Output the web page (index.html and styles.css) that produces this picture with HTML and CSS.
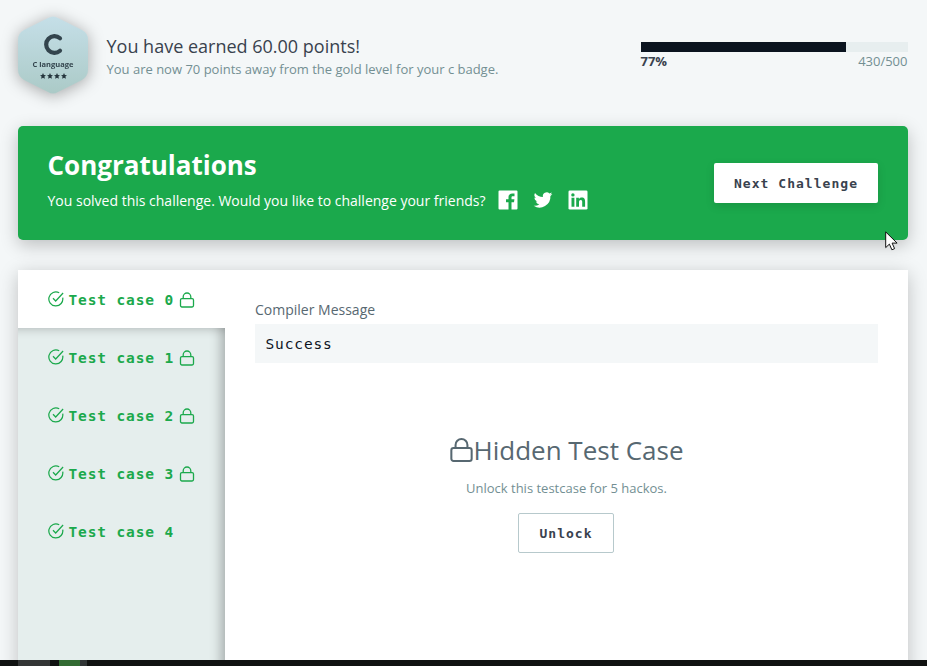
FILE: index.html
```html
<!DOCTYPE html>
<html lang="en">
<head>
<meta charset="utf-8">
<title>Challenge result</title>
<link rel="stylesheet" href="styles.css">
</head>
<body>
<svg class="defs" width="0" height="0" aria-hidden="true">
  <symbol id="check" viewBox="0 0 16 16"><path d="M14.700 6.600A7 7 0 1 1 11.200 1.800M5 7.200l2.700 2.800 7.400-8"/></symbol>
  <symbol id="lock" viewBox="0 0 16 16"><rect x="1.500" y="6.700" width="13" height="8.300" rx="1.400"/><path d="M4.200 6.700V4.800a3.800 3.800 0 0 1 7.600 0V6.700"/></symbol>
</svg>
<main class="page">
  <header class="progress-header">
    <div class="badge">
      <svg class="badge-shape" width="72" height="78" viewBox="0 0 72 78">
        <defs><linearGradient id="silver" x1="0" y1="0" x2="0" y2="1"><stop offset="0" stop-color="#c5dfe8"/><stop offset="1" stop-color="#abcac7"/></linearGradient></defs>
        <path fill="url(#silver)" d="M31 2Q36-1 41 2L65 14Q71 17 71 24V54Q71 60 65 64L41 76Q36 79 31 76L7 64Q1 60 1 54V24Q1 17 7 14Z"/>
        <path d="M43 22.300a8.300 8.300 0 1 0 0 12.400" fill="none" stroke="#33444d" stroke-width="4.200" stroke-linecap="round"/>
      </svg>
      <div class="badge-name">C language</div>
      <svg class="stars" width="27" height="6" viewBox="0 0 27 6"><g fill="#25353d"><path id="star" d="M3 0l.9 2 2.100.2-1.600 1.400.5 2.200L3 4.700 1.100 5.800l.5-2.200L0 2.200 2.100 2z"/><use href="#star" x="7"/><use href="#star" x="14"/><use href="#star" x="21"/></g></svg>
    </div>
    <div class="earned">
      <h1>You have earned 60.00 points!</h1>
      <p>You are now 70 points away from the gold level for your c badge.</p>
    </div>
    <div class="progress">
      <div class="track"><div class="fill"></div></div>
      <div class="progress-labels"><b>77%</b><span>430/500</span></div>
    </div>
  </header>

  <section class="congrats">
    <div>
      <h2>Congratulations</h2>
      <div class="share">
        <span class="share-text">You solved this challenge. Would you like to challenge your friends?</span>
        <svg width="20" height="20" viewBox="0 0 20 20"><path fill="#fff" d="M1.5.5h17a1 1 0 0 1 1 1v17a1 1 0 0 1-1 1h-5v-7.3H16l.4-2.9h-2.9V7.6c0-.9.3-1.4 1.5-1.4h1.5V3.5a20 20 0 0 0-2.2-.1c-2.3 0-3.8 1.3-3.8 3.8v2.1H8v2.9h2.5v7.3h-9a1 1 0 0 1-1-1v-17a1 1 0 0 1 1-1z"/></svg>
        <svg width="20" height="20" viewBox="0 0 24 24"><path fill="#fff" d="M23.2 4.9a9 9 0 0 1-2.6.7 4.600 4.600 0 0 0 2-2.500 9 9 0 0 1-2.900 1.100 4.600 4.600 0 0 0-7.800 4.200A13 13 0 0 1 2.400 3.600a4.600 4.600 0 0 0 1.400 6.100 4.500 4.500 0 0 1-2-.600 4.600 4.600 0 0 0 3.600 4.600 4.500 4.500 0 0 1-2 .1 4.600 4.600 0 0 0 4.200 3.200A9.200 9.200 0 0 1 .8 18.900 13 13 0 0 0 20.900 7.300a9 9 0 0 0 2.300-2.400z"/></svg>
        <svg width="20" height="20" viewBox="0 0 20 20"><rect x=".5" y=".5" width="19" height="19" rx="1.3" fill="#fff"/><g fill="#1ba94c"><circle cx="4.900" cy="4.900" r="1.700"/><path d="M3.500 7.700h2.900v9H3.500zM8.200 7.700h2.700v1.200c.5-.8 1.400-1.500 2.800-1.500 2.900 0 3.400 1.900 3.400 4.300v5h-2.900v-4.400c0-1.100 0-2.400-1.500-2.400s-1.700 1.100-1.700 2.300v4.500H8.200z"/></g></svg>
      </div>
    </div>
    <button class="btn next">Next Challenge</button>
  </section>

  <section class="results">
    <nav class="tabs">
      <a class="tab active"><svg class="line-icon check"><use href="#check"/></svg><span>Test case 0</span><svg class="line-icon lock"><use href="#lock"/></svg></a>
      <div class="inactive-tabs">
        <a class="tab"><svg class="line-icon check"><use href="#check"/></svg><span>Test case 1</span><svg class="line-icon lock"><use href="#lock"/></svg></a>
        <a class="tab"><svg class="line-icon check"><use href="#check"/></svg><span>Test case 2</span><svg class="line-icon lock"><use href="#lock"/></svg></a>
        <a class="tab"><svg class="line-icon check"><use href="#check"/></svg><span>Test case 3</span><svg class="line-icon lock"><use href="#lock"/></svg></a>
        <a class="tab"><svg class="line-icon check"><use href="#check"/></svg><span>Test case 4</span></a>
      </div>
    </nav>
    <div class="detail">
      <div class="label">Compiler Message</div>
      <div class="message">Success</div>
      <div class="hidden-case">
        <h3><svg class="line-icon big-lock"><use href="#lock"/></svg><span>Hidden Test Case</span></h3>
        <p>Unlock this testcase for 5 hackos.</p>
        <button class="btn unlock">Unlock</button>
      </div>
    </div>
  </section>
</main>
<footer class="taskbar"><i class="task gray"></i><i class="task green"></i><i class="task edge"></i></footer>
<svg class="cursor" width="13" height="20" viewBox="0 0 13 20"><path d="M.7.900v15.700l3.700-3.500 2.500 5.700 2.700-1.200-2.500-5.500h5z" fill="#fff" stroke="#111" stroke-width="1"/></svg>
</body>
</html>
```
FILE: styles.css
```css
* { box-sizing: border-box; }
body {
  margin: 0;
  height: 666px;
  overflow: hidden;
  display: flex;
  flex-direction: column;
  background: #f4f7f8;
  color: #39424e;
  font-family: "Open Sans", sans-serif;
}
h1, h2, h3, p { margin: 0; font-weight: 400; }
.defs { position: absolute; }
.page {
  height: 660px;
  padding: 0 19px 0 18px;
  overflow: hidden;
  display: flex;
  flex-direction: column;
}
.progress-header {
  height: 126px;
  flex: none;
  display: flex;
  align-items: flex-start;
}
.badge {
  position: relative;
  width: 72px;
  height: 78px;
  margin: 16px 0 0 -1px;
  filter: drop-shadow(0 2px 8px rgba(0, 0, 0, .33));
}
.badge-shape { display: block; }
.badge-name {
  position: absolute;
  top: 42px;
  left: 0;
  width: 72px;
  text-align: center;
  font-size: 7.5px;
  line-height: 12px;
  font-weight: 700;
  color: #33444d;
}
.stars { position: absolute; left: 23px; top: 57px; }
.earned { margin: 33px 0 0 17.5px; white-space: nowrap; }
.earned h1 { font-size: 18px; line-height: 26px; }
.earned p { font-size: 13px; line-height: 20px; color: #738f93; }
.progress { width: 267px; margin: 42px 0 0 auto; }
.track { height: 10px; background: #e7eeef; }
.fill { width: 205px; height: 10px; background: #0b141f; }
.progress-labels {
  display: flex;
  justify-content: space-between;
  margin: 0 .5px 0 -.5px;
  font-size: 13px;
  line-height: 19px;
}
.progress-labels span { color: #738f93; }
.congrats {
  height: 114px;
  flex: none;
  padding: 23px 30px 0 29.5px;
  display: flex;
  justify-content: space-between;
  background: #1ba94c;
  border-radius: 5px;
  color: #fff;
  box-shadow: 0 5px 18px rgba(0, 0, 0, .23);
}
.congrats h2 { font-size: 26px; line-height: 32px; font-weight: 700; }
.share { display: flex; align-items: center; gap: 15px; margin-top: 9px; height: 20px; white-space: nowrap; }
.share-text { font-size: 14px; line-height: 20px; margin-right: -2.5px; padding-top: 2px; }
.btn {
  height: 40px;
  padding: 0;
  font-family: "DejaVu Sans Mono", monospace;
  font-size: 13px;
  font-weight: 700;
  letter-spacing: 1.03px;
  color: #39424e;
  background: #fff;
  border: 0;
  border-radius: 2px;
}
.next { width: 164px; margin-top: 14px; box-shadow: 0 3px 10px rgba(0, 0, 0, .12); }
.results {
  height: 420px;
  flex: none;
  margin-top: 30px;
  display: flex;
  background: #fff;
  box-shadow: 0 4px 18px rgba(0, 0, 0, .22);
}
.tabs { width: 207px; display: flex; flex-direction: column; }
.tab {
  height: 58px;
  flex: none;
  padding: 2px 0 0 30px;
  display: flex;
  align-items: center;
  color: #1ba94c;
  font: 700 14.5px/20px "DejaVu Sans Mono", monospace;
  letter-spacing: .87px;
}
.line-icon { fill: none; stroke: currentColor; flex: none; }
.check { width: 16px; height: 16px; margin: -2px 4.5px 0 0; stroke-width: 1.25; }
.lock { width: 16px; height: 16px; margin-left: 4.5px; stroke-width: 1.3; }
.inactive-tabs {
  flex: 1;
  background: #e5eeed;
  box-shadow: inset -13px 0 12px -9px rgba(0, 0, 0, .27), inset 0 11px 10px -9px rgba(0, 0, 0, .18);
}
.detail { flex: 1; padding: 30px 30px 0; }
.label { font-size: 14px; line-height: 20px; color: #576871; }
.message {
  height: 39px;
  margin-top: 4px;
  padding: 1px 0 0 10.5px;
  background: #f4f7f8;
  color: #0e141e;
  font: 14.5px/39px "DejaVu Sans Mono", monospace;
  letter-spacing: .87px;
}
.hidden-case { margin-top: 69px; display: flex; flex-direction: column; align-items: center; }
.hidden-case h3 {
  display: flex;
  align-items: center;
  font-size: 26px;
  line-height: 36px;
  color: #576871;
  white-space: nowrap;
}
.big-lock { width: 25px; height: 26px; margin-left: -1px; stroke-width: 1.3; }
.hidden-case p { font-size: 13px; line-height: 20px; margin-top: 10px; color: #738f93; }
.unlock { width: 96px; margin: 15px 1px 0 0; border: 1px solid #b7c9cc; }
.taskbar { height: 6px; flex: none; padding-left: 18px; display: flex; background: #101211; }
.task { height: 6px; }
.gray { width: 32px; background: #333535; }
.green { width: 21px; margin-left: 9px; background: #326a32; }
.edge { width: 7px; background: #303535; }
.cursor { position: absolute; left: 885px; top: 231px; }
```
